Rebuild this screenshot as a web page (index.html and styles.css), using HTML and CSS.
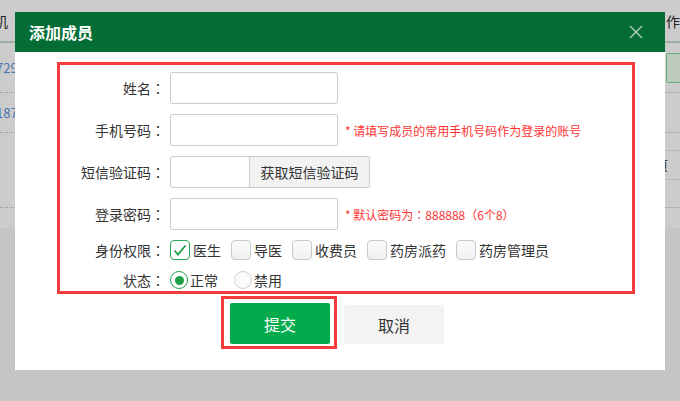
FILE: index.html
```html
<!DOCTYPE html>
<html lang="zh-CN">
<head>
    <meta charset="UTF-8">
    <title>添加成员</title>
    <link rel="stylesheet" href="styles.css">
</head>
<body>
    <div class="page">
        <div class="page-head">
            <span class="head-left">机</span>
            <span class="head-right">作</span>
        </div>
        <div class="page-row row-1">
            <span class="cell-left">729</span>
            <span class="cell-right"><span class="op-btn"></span></span>
        </div>
        <div class="page-row row-2">
            <span class="cell-left">187</span>
        </div>
        <div class="page-row row-3">
            <span class="cell-right pager">页</span>
        </div>
    </div>

    <div class="modal">
        <div class="modal-header">
            <h3>添加成员</h3>
            <svg class="close" width="14" height="14" viewBox="0 0 14 14">
                <path d="M1 1 L13 13 M13 1 L1 13" stroke="#b9d3c2" stroke-width="1.3" fill="none"/>
            </svg>
        </div>
        <div class="modal-body">
            <div class="form-box">
                <div class="form-row">
                    <label class="form-label">姓名<span class="colon" lang="zh-TW">：</span></label>
                    <input class="form-input" type="text">
                </div>
                <div class="form-row">
                    <label class="form-label">手机号码<span class="colon" lang="zh-TW">：</span></label>
                    <input class="form-input" type="text">
                    <span class="hint">* 请填写成员的常用手机号码作为登录的账号</span>
                </div>
                <div class="form-row">
                    <label class="form-label">短信验证码<span class="colon" lang="zh-TW">：</span></label>
                    <input class="form-input code-input" type="text">
                    <button class="code-btn">获取短信验证码</button>
                </div>
                <div class="form-row">
                    <label class="form-label">登录密码<span class="colon" lang="zh-TW">：</span></label>
                    <input class="form-input" type="text">
                    <span class="hint">* 默认密码为<span class="colon" lang="zh-TW">：</span>888888（6个8）</span>
                </div>
                <div class="form-row small-row">
                    <label class="form-label">身份权限<span class="colon" lang="zh-TW">：</span></label>
                    <div class="options">
                        <span class="check checked">
                            <svg width="14" height="12" viewBox="0 0 14 12"><path d="M1.5 6.5 L5 10.5 L12.5 1.5" stroke="#1ea04a" stroke-width="1.8" fill="none"/></svg>
                        </span><span class="opt-text">医生</span>
                        <span class="check"></span><span class="opt-text">导医</span>
                        <span class="check"></span><span class="opt-text">收费员</span>
                        <span class="check"></span><span class="opt-text">药房派药</span>
                        <span class="check"></span><span class="opt-text">药房管理员</span>
                    </div>
                </div>
                <div class="form-row small-row">
                    <label class="form-label">状态<span class="colon" lang="zh-TW">：</span></label>
                    <div class="options">
                        <span class="radio checked"></span><span class="opt-text radio-text">正常</span>
                        <span class="radio"></span><span class="opt-text radio-text">禁用</span>
                    </div>
                </div>
            </div>
            <div class="actions">
                <div class="submit-wrap">
                    <button class="btn btn-submit">提交</button>
                </div>
                <button class="btn btn-cancel">取消</button>
            </div>
        </div>
    </div>
</body>
</html>
```

FILE: styles.css
```css
* {
    margin: 0;
    padding: 0;
    box-sizing: border-box;
    font-family: "Noto Sans CJK SC", "Noto Sans", sans-serif;
}

body {
    width: 680px;
    height: 401px;
    background: #c4c5c7;
    position: relative;
    overflow: hidden;
}

/* page behind the overlay */
.page {
    height: 228px;
    background: #cccccc;
    overflow: hidden;
}

.page-head {
    height: 43px;
    border-bottom: 2px solid #9ead9f;
    display: flex;
    justify-content: space-between;
    align-items: center;
    font-size: 14px;
    color: #222;
}

.head-left {
    margin-left: -6px;
}

.page-row {
    display: flex;
    justify-content: space-between;
    align-items: center;
    border-bottom: 1px dotted #999;
    font-size: 13px;
    color: #4a74ad;
}

.row-1 {
    height: 50px;
}

.row-2 {
    height: 40px;
}

.row-3 {
    height: 75px;
    justify-content: flex-end;
}

.cell-left {
    margin-left: -4px;
}

.op-btn {
    display: block;
    width: 30px;
    height: 30px;
    margin-right: -16px;
    border: 1px solid #6ab07f;
    border-radius: 2px;
    background: #bccabd;
}

.pager {
    height: 30px;
    width: 15px;
    border-top: 1px solid #b8b8b8;
    border-bottom: 1px solid #b8b8b8;
    font-size: 13px;
    color: #222;
    line-height: 28px;
    text-indent: -10px;
    overflow: hidden;
    margin-top: -10px;
}

/* modal */
.modal {
    position: absolute;
    left: 15px;
    top: 12px;
    width: 650px;
    height: 358px;
    background: #fff;
}

.modal-header {
    height: 40px;
    background: #036d35;
    display: flex;
    align-items: center;
    justify-content: space-between;
    padding: 0 22px 0 14px;
}

.modal-header h3 {
    color: #fff;
    font-size: 16px;
    font-weight: bold;
}

.modal-body {
    padding: 10px 0 0 42px;
}

.form-box {
    width: 578px;
    height: 232px;
    border: 3px solid #f23b3b;
    padding-top: 7px;
}

.form-row {
    display: flex;
    align-items: center;
    height: 32px;
    margin-bottom: 10px;
    font-size: 14px;
    color: #333;
}

.form-row.small-row {
    height: 20px;
}

.form-label {
    width: 105px;
    text-align: right;
    margin-right: 5px;
}

.colon {
    font-family: "Noto Sans CJK TC", sans-serif;
}

.form-input {
    width: 168px;
    height: 32px;
    border: 1px solid #ccc;
    border-radius: 2px;
    outline: none;
}

.code-input {
    width: 80px;
    border-radius: 2px 0 0 2px;
}

.code-btn {
    width: 120px;
    height: 32px;
    border: 1px solid #ccc;
    border-left: none;
    background: #f2f2f2;
    font-size: 14px;
    color: #333;
    border-radius: 0 2px 2px 0;
}

.hint {
    margin-left: 7px;
    font-size: 12px;
    color: #ff3434;
}

.options {
    display: flex;
    align-items: center;
}

.check {
    width: 20px;
    height: 20px;
    border: 1px solid #c9c9c9;
    border-radius: 4px;
    background: linear-gradient(#fbfbfb, #f0f0f0);
    display: flex;
    align-items: center;
    justify-content: center;
    margin-right: 3px;
}

.check.checked {
    border-color: #2aa553;
    background: #fff;
}

.opt-text {
    margin-right: 10px;
}

.radio {
    width: 18px;
    height: 18px;
    border: 1px solid #d0d0d0;
    border-radius: 50%;
    background: #fafafa;
    margin-right: 2px;
    display: flex;
    align-items: center;
    justify-content: center;
}

.radio-text {
    margin-right: 16px;
}

.radio.checked {
    border-color: #1ea04a;
    background: #fff;
}

.radio.checked::after {
    content: "";
    width: 9px;
    height: 9px;
    border-radius: 50%;
    background: #1ea04a;
}

.actions {
    display: flex;
    align-items: flex-start;
    margin: 2px 0 0 164px;
}

.submit-wrap {
    border: 3px solid #f23b3b;
    padding: 4px 4px 2px 6px;
}

.btn {
    width: 100px;
    height: 41px;
    border: none;
    border-radius: 2px;
    font-size: 16px;
}

.btn-submit {
    background: #03ab4d;
    color: #fff;
}

.btn-cancel {
    margin: 9px 0 0 7px;
    height: 39px;
    background: #f3f3f3;
    color: #333;
}
```
